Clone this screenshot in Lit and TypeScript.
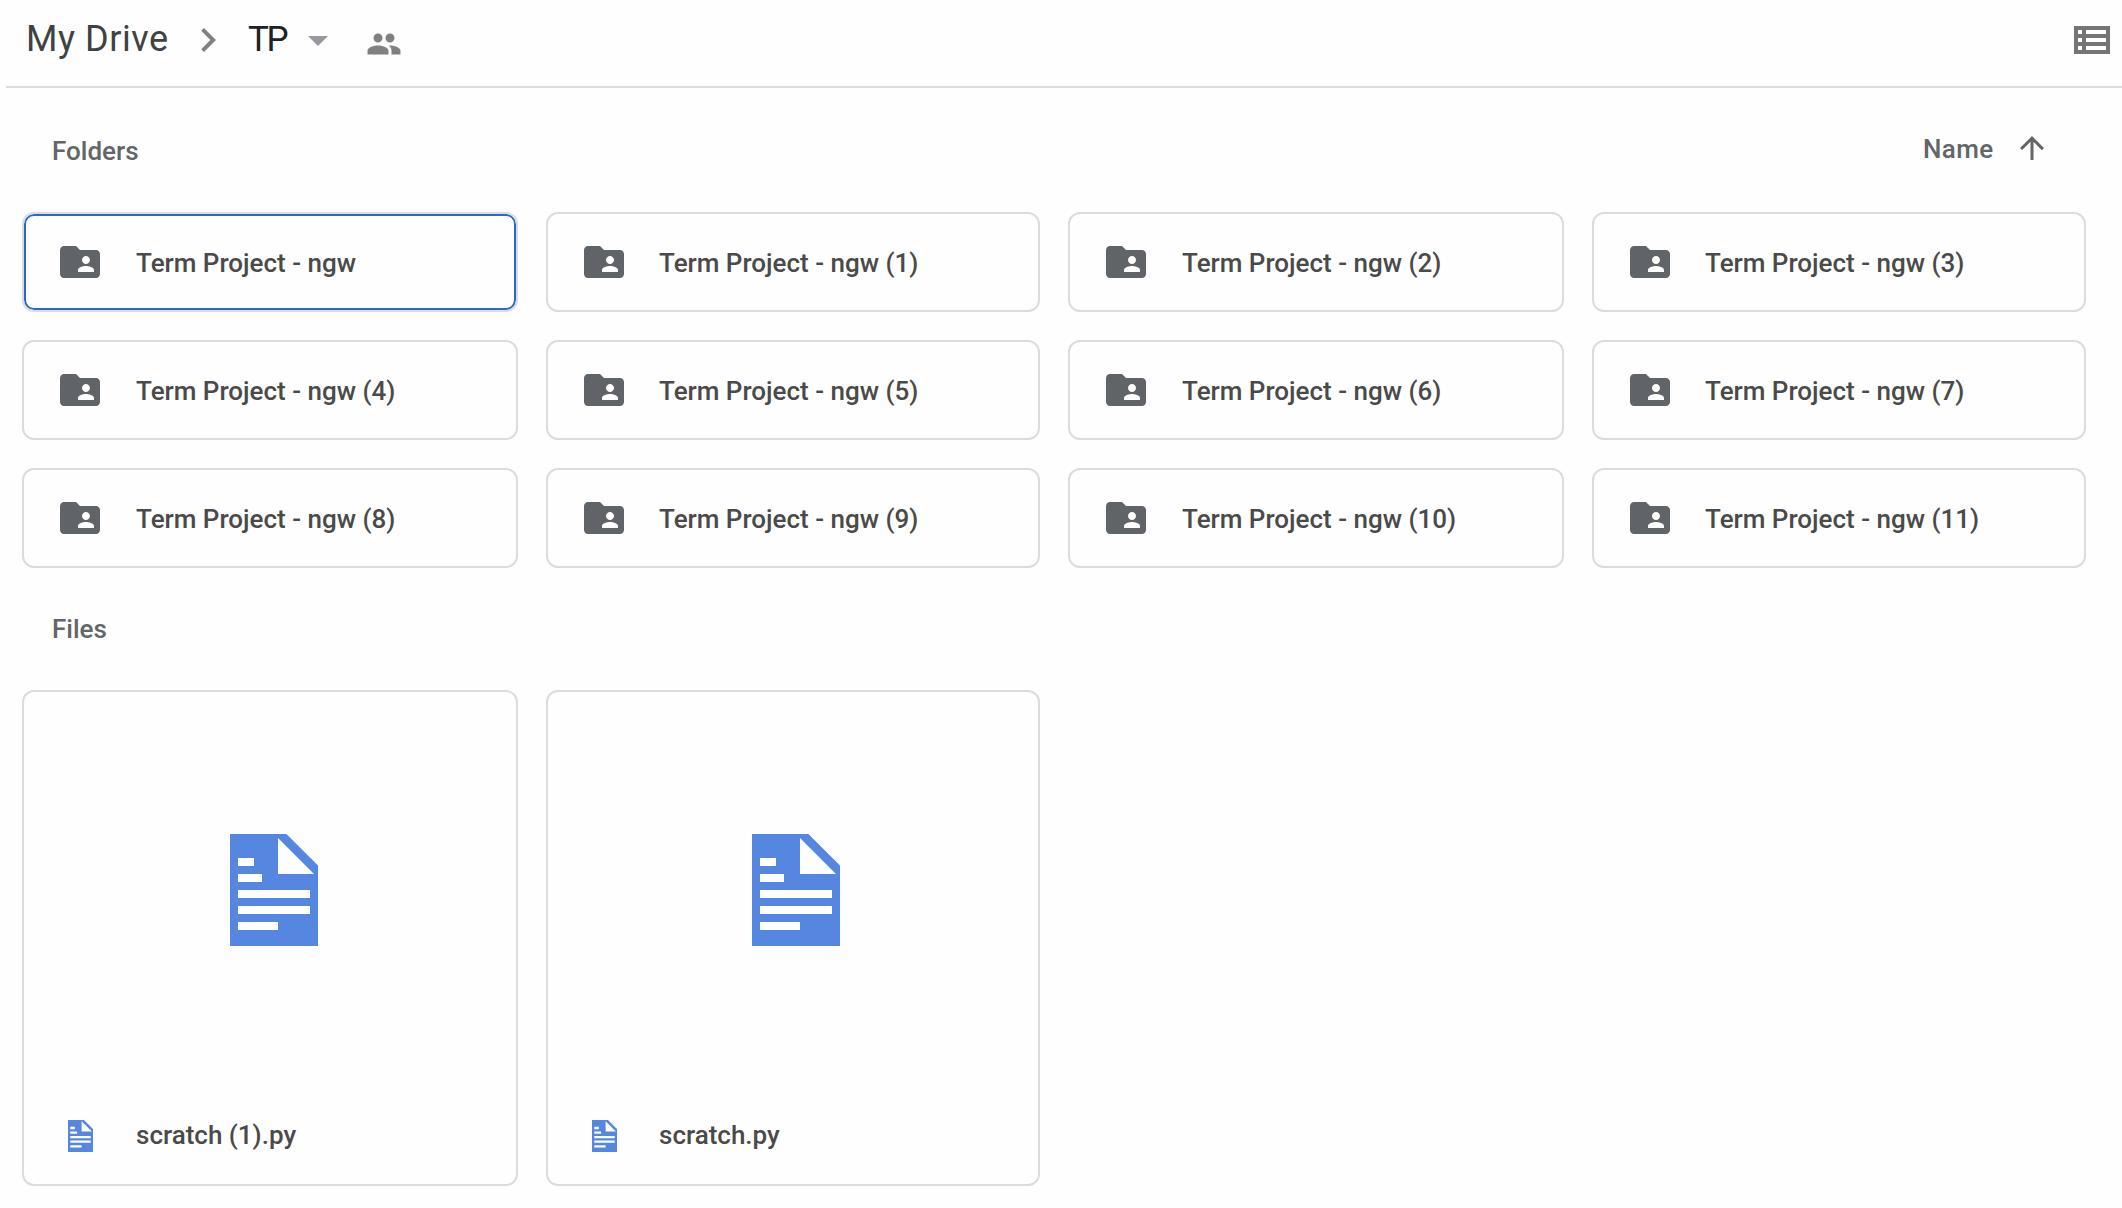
import { LitElement, html, css } from "lit";
import { customElement, property } from "lit/decorators.js";

@customElement("doc-icon")
class DocIcon extends LitElement {
  static styles = css`
    :host { display: block; }
    .glyph { display: block; width: 100%; height: 100%; }
  `;
  render() {
    return html`<svg class="glyph" viewBox="0 0 22 28" preserveAspectRatio="none">
      <path fill="#5687e0" d="M0 0H14.1L22 7.9V28H0Z" />
      <path fill="#fefefe" d="M12 1L21 10H12Z" />
      <path fill="#fefefe" d="M2 6h4v2H2zM2 10h6v2H2zM2 14h18v2H2zM2 18h18v2H2zM2 22h10v2H2z" />
    </svg>`;
  }
}

@customElement("folder-card")
class FolderCard extends LitElement {
  @property() name = "";
  @property({ type: Boolean, reflect: true }) selected = false;
  static styles = css`
    :host {
      display: flex; align-items: center; box-sizing: border-box; height: 100px;
      border: 2px solid #dbdce1; border-radius: 12px; padding-left: 32px;
    }
    :host([selected]) { box-shadow: inset 0 0 0 2px #2b67cc; }
    .icon { width: 48px; height: 48px; flex: none; }
    .name { margin-left: 32px; padding-top: 2px; white-space: nowrap; }
    :host(:nth-child(even)) .name { margin-left: 31px; }
  `;
  render() {
    return html`
      <svg class="icon" viewBox="0 0 24 24" fill="#606368">
        <path d="M20 6h-8l-2-2H4c-1.1 0-1.99.9-1.99 2L2 18c0 1.1.9 2 2 2h16c1.1 0 2-.9 2-2V8c0-1.1-.9-2-2-2zm-5 3c1.1 0 2 .9 2 2s-.9 2-2 2-2-.9-2-2 .9-2 2-2zm4 8h-8v-1c0-1.33 2.67-2 4-2s4 .67 4 2v1z" />
      </svg>
      <span class="name">${this.name}</span>`;
  }
}

@customElement("file-card")
class FileCard extends LitElement {
  @property() name = "";
  static styles = css`
    :host {
      display: flex; flex-direction: column; box-sizing: border-box; height: 496px;
      border: 2px solid #dbdce1; border-radius: 12px;
    }
    .preview { flex: 1; display: flex; justify-content: flex-end; align-items: center; padding-right: 198px; }
    .large { width: 88px; height: 112px; }
    .caption { display: flex; align-items: center; height: 96px; padding-left: 44px; }
    .small { width: 25px; height: 32px; flex: none; }
    .name { margin-left: 43px; padding-bottom: 2px; white-space: nowrap; }
    :host(:nth-child(even)) .name { margin-left: 42px; }
  `;
  render() {
    return html`
      <div class="preview"><doc-icon class="large"></doc-icon></div>
      <div class="caption"><doc-icon class="small"></doc-icon><span class="name">${this.name}</span></div>`;
  }
}

@customElement("app-root")
class AppRoot extends LitElement {
  folders = Array.from({ length: 12 }, (_, i) => "Term Project - ngw" + (i ? ` (${i})` : ""));
  files = ["scratch (1).py", "scratch.py"];

  static styles = css`
    :host {
      display: block; box-sizing: border-box; height: 1208px; overflow: hidden;
      background: #fefefe; color: #4a4a4a;
      font: 500 26px/32px Roboto, sans-serif;
    }
    .bar {
      display: flex; align-items: flex-start; height: 86px; margin-left: 6px; padding: 0 12px 0 20px;
      border-bottom: 2px solid #dbdce1; font: 400 36px/44px Roboto, sans-serif;
    }
    .crumb { width: 158px; padding-top: 17px; color: #3f4245; white-space: nowrap; letter-spacing: 0.55px; }
    .chev { width: 48px; height: 48px; margin-top: 16px; flex: none; }
    .current { width: 62px; padding: 18px 0 0 16px; box-sizing: border-box; color: #202124; white-space: nowrap; font-size: 35px; letter-spacing: -2.5px; }
    .drop { width: 48px; height: 48px; margin-top: 16px; flex: none; }
    .people { width: 36px; height: 36px; margin: 25.5px 0 0 24px; flex: none; }
    .list { width: 36px; height: 28px; margin: 26px 0 0 auto; flex: none; }
    .heading { display: flex; justify-content: space-between; height: 124px; box-sizing: border-box; padding: 47px 72px 0 52px; color: #626569; }
    .sort { display: flex; margin-top: -2px; }
    .sort-name { width: 91px; letter-spacing: 0.4px; }
    .arrow { width: 36px; height: 36px; margin-top: -3px; }
    .grid { display: grid; grid-template-columns: 496px 494px 496px 494px; column-gap: 28px; row-gap: 28px; padding-left: 22px; }
    .files { height: 122px; box-sizing: border-box; padding: 45px 0 0 52px; color: #626569; }
  `;

  render() {
    return html`
      <header class="bar">
        <span class="crumb">My Drive</span>
        <svg class="chev" viewBox="0 0 24 24" fill="#808080"><path d="M10 6L8.59 7.41 13.17 12l-4.58 4.59L10 18l6-6z" /></svg>
        <span class="current">TP</span>
        <svg class="drop" viewBox="0 0 24 24" fill="#98999e"><path d="M7 10l5 5 5-5z" /></svg>
        <svg class="people" viewBox="0 0 24 24" fill="#808080"><path d="M16 11c1.66 0 2.99-1.34 2.99-3S17.66 5 16 5c-1.66 0-3 1.34-3 3s1.34 3 3 3zm-8 0c1.66 0 2.99-1.34 2.99-3S9.66 5 8 5C6.34 5 5 6.34 5 8s1.34 3 3 3zm0 2c-2.33 0-7 1.17-7 3.5V19h14v-2.5c0-2.33-4.67-3.5-7-3.5zm8 0c-.29 0-.62.02-.97.05 1.16.84 1.97 1.97 1.97 3.45V19h6v-2.5c0-2.33-4.67-3.5-7-3.5z" /></svg>
        <svg class="list" viewBox="0 0 36 28" fill="#757575"><path fill-rule="evenodd" d="M0 0h36v28H0zM4 4v4h4V4zM12 4v4h20V4zM4 12v4h4v-4zM12 12v4h20v-4zM4 20v4h4v-4zM12 20v4h20v-4z" /></svg>
      </header>
      <div class="heading">
        <span>Folders</span>
        <div class="sort">
          <span class="sort-name">Name</span>
          <svg class="arrow" viewBox="0 0 24 24" fill="#626569"><path d="M4 12l1.41 1.41L11 7.83V20h2V7.83l5.58 5.59L20 12l-8-8-8 8z" /></svg>
        </div>
      </div>
      <div class="grid">${this.folders.map((n, i) => html`<folder-card .name=${n} ?selected=${i === 0}></folder-card>`)}</div>
      <div class="files">Files</div>
      <div class="grid">${this.files.map((n) => html`<file-card .name=${n}></file-card>`)}</div>
    `;
  }
}
